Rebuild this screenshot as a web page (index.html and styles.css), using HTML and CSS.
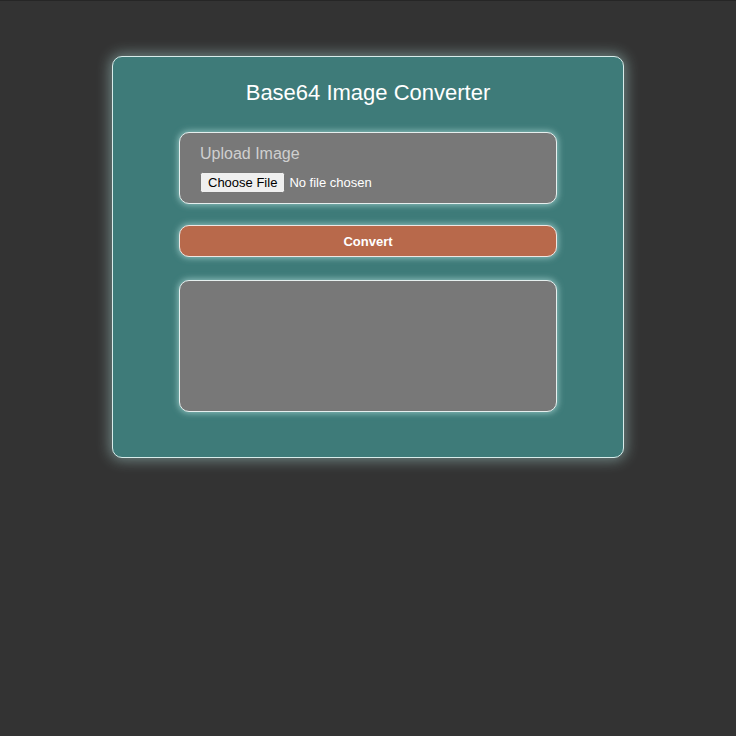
FILE: index.html
```html
<!DOCTYPE html>
<html lang="en">
<head>
<meta charset="utf-8">
<title>Base64 Image Converter</title>
<link rel="stylesheet" href="styles.css">
</head>
<body>
<div class="topline"></div>
<main class="card">
  <h1 class="title">Base64 Image Converter</h1>
  <div class="panel upload">
    <label class="upload-label" for="file">Upload Image</label>
    <input class="file-input" type="file" id="file" accept="image/*">
  </div>
  <button class="convert" type="button">Convert</button>
  <div class="panel output"></div>
</main>
</body>
</html>
```
FILE: styles.css
```css
html, body {
  margin: 0;
  padding: 0;
}
body {
  background: #333333;
  min-height: 736px;
  font-family: "Liberation Sans", Arial, sans-serif;
  overflow: hidden;
}
.topline {
  height: 1px;
  background: #262626;
}
.card {
  box-sizing: border-box;
  width: 512px;
  height: 402px;
  margin: 55px auto 0;
  background: #3e7b79;
  border: 1px solid #d8ecea;
  border-radius: 10px;
  box-shadow: 0 0 14px 2px rgba(190, 240, 235, 0.45);
  padding: 21px 0 45px;
  display: flex;
  flex-direction: column;
  align-items: center;
}
.title {
  margin: 0;
  font-size: 22px;
  line-height: 30px;
  font-weight: normal;
  color: #ffffff;
}
.panel {
  box-sizing: border-box;
  width: 378px;
  background: #787878;
  border: 1px solid #e6efee;
  border-radius: 10px;
  box-shadow: 0 0 6px 1px rgba(210, 250, 245, 0.55);
}
.upload {
  margin-top: 24px;
  height: 72px;
  padding: 11px 20px 10px;
  display: flex;
  flex-direction: column;
  align-items: flex-start;
}
.upload-label {
  font-size: 16px;
  line-height: 20px;
  color: #cfcfcf;
  margin-bottom: 8px;
}
.file-input {
  font-family: "Liberation Sans", Arial, sans-serif;
  font-size: 13px;
  color: #ffffff;
}
.convert {
  box-sizing: border-box;
  margin-top: 21px;
  width: 378px;
  height: 32px;
  background: #b8694b;
  border: 1px solid #efe6e2;
  border-radius: 10px;
  box-shadow: 0 0 6px 1px rgba(210, 250, 245, 0.55);
  color: #ffffff;
  font-family: "Liberation Sans", Arial, sans-serif;
  font-weight: bold;
  font-size: 13px;
  padding: 0;
}
.output {
  margin-top: 23px;
  height: 132px;
}
```
